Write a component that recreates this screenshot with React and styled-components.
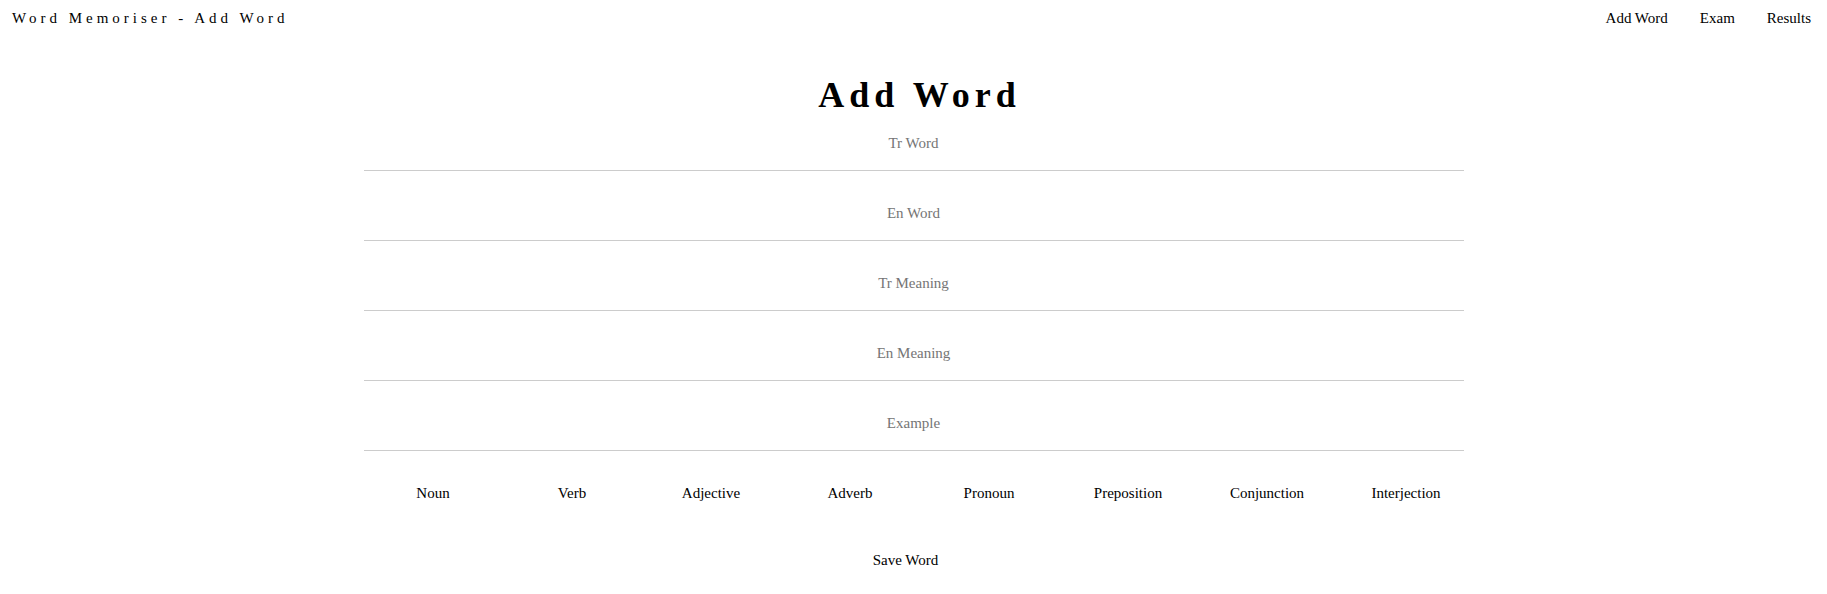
import React from 'react'
import styled, { createGlobalStyle } from 'styled-components'

const GlobalStyle = createGlobalStyle`
  body {
    margin: 0;
    background: #fff;
    color: #000;
    font-family: "Liberation Serif", "Times New Roman", serif;
    font-size: 15px;
  }
`

const fields = ['Tr Word', 'En Word', 'Tr Meaning', 'En Meaning', 'Example']
const types = ['Noun', 'Verb', 'Adjective', 'Adverb', 'Pronoun', 'Preposition', 'Conjunction', 'Interjection']

function App() {
  return (
    <>
      <GlobalStyle />
      <Header>
        <Brand>Word Memoriser - Add Word</Brand>
        <Nav>
          <a href="#">Add Word</a>
          <a href="#">Exam</a>
          <a href="#">Results</a>
        </Nav>
      </Header>
      <Main>
        <Title>Add Word</Title>
        <Form>
          {fields.map(f => (
            <Field key={f} placeholder={f} />
          ))}
        </Form>
        <Types>
          {types.map(t => (
            <TypeButton key={t}>{t}</TypeButton>
          ))}
        </Types>
        <SaveRow>
          <SaveButton>Save Word</SaveButton>
        </SaveRow>
      </Main>
    </>
  )
}

export default App

const Header = styled.div`
  display: flex;
  justify-content: space-between;
  align-items: flex-start;
  padding: 10px 0 0 12px;
`
const Brand = styled.div`
  letter-spacing: 4px;
`
const Nav = styled.div`
  display: flex;

  a {
    color: #000;
    text-decoration: none;
    padding: 0 16px;
  }
`
const Main = styled.div`
  width: 1100px;
  margin: 0 auto;
`
const Title = styled.h1`
  margin: 48px 0 0;
  padding-left: 12px;
  font-size: 36px;
  line-height: 41px;
  font-weight: bold;
  letter-spacing: 5px;
  text-align: center;
`
const Form = styled.div`
  display: flex;
  flex-direction: column;
  gap: 15px;
`
const Field = styled.input`
  box-sizing: border-box;
  height: 55px;
  width: 100%;
  border: none;
  border-bottom: 1px solid #ccc;
  outline: none;
  text-align: center;
  font-family: inherit;
  font-size: 15px;
  background: transparent;

  &::placeholder {
    color: #757575;
  }
`
const Types = styled.div`
  display: flex;
  margin-top: 24px;
`
const TypeButton = styled.button`
  flex: 0 0 139px;
  padding: 10px 0;
  border: none;
  background: none;
  font-family: inherit;
  font-size: 15px;
  color: #000;
  cursor: pointer;
`
const SaveRow = styled.div`
  display: flex;
  justify-content: center;
  padding-right: 16px;
  margin-top: 30px;
`
const SaveButton = styled.button`
  padding: 10px 0;
  border: none;
  background: none;
  font-family: inherit;
  font-size: 15px;
  color: #000;
  cursor: pointer;
`
